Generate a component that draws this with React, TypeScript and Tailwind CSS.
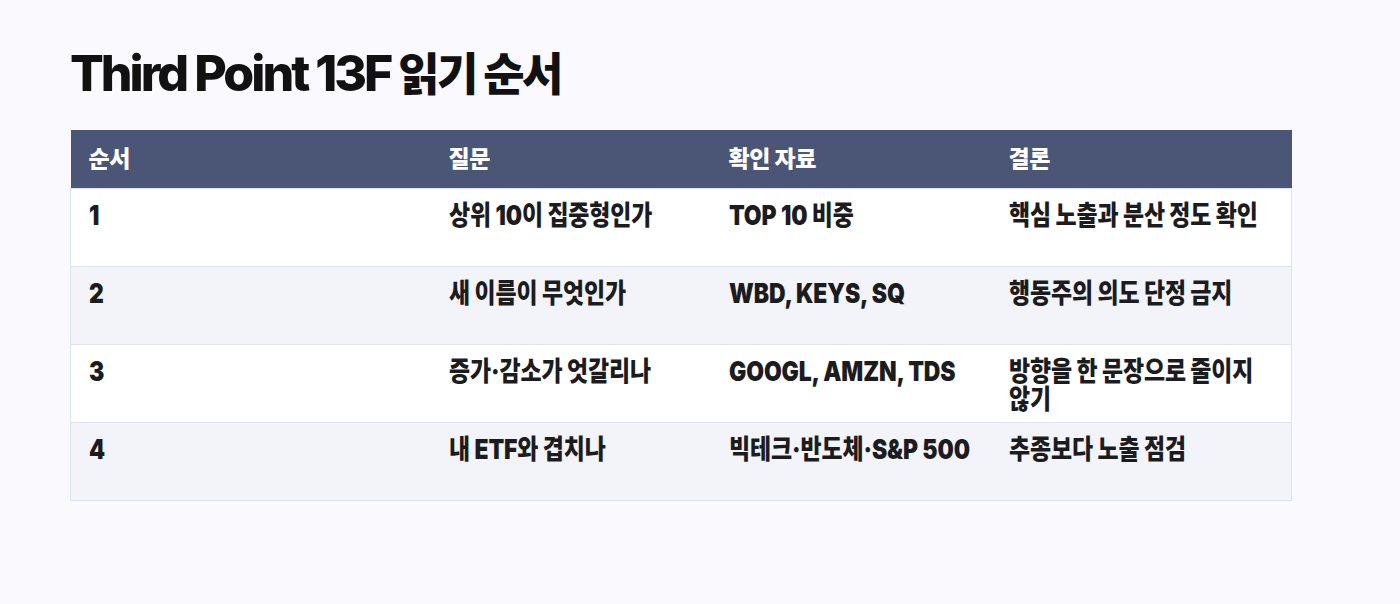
const rows = [
  { no: '1', q: '상위 10이 집중형인가', src: 'TOP 10 비중', end: '핵심 노출과 분산 정도 확인' },
  { no: '2', q: '새 이름이 무엇인가', src: 'WBD, KEYS, SQ', end: '행동주의 의도 단정 금지' },
  { no: '3', q: '증가·감소가 엇갈리나', src: 'GOOGL, AMZN, TDS', end: '방향을 한 문장으로 줄이지 않기' },
  { no: '4', q: '내 ETF와 겹치나', src: '빅테크·반도체·S&P 500', end: '추종보다 노출 점검' },
];

function Cell({ children, width }: { children: React.ReactNode; width: number }) {
  // row text is drawn narrower than the header text
  return (
    <td className="h-[78px] px-[18px] pt-[13px] align-top">
      <span
        className="inline-block origin-top-left scale-x-[0.85] text-[27px] font-black leading-[28px] tracking-[-0.005em] text-[#1c1c1e]"
        style={{ width: Math.round((width - 36) / 0.85) }}
      >
        {children}
      </span>
    </td>
  );
}

export default function App() {
  return (
    <div className="min-h-[604px] bg-[#f9f9fe] px-[70px] pt-[42px] font-['Inter','Noto_Sans_CJK_KR',sans-serif]">
      <h1 className="mb-[27px] text-[50px] font-extrabold leading-[60px] tracking-[-0.06em] text-[#111111]">
        Third Point 13F{' '}
        <span className="font-['Noto_Sans_CJK_KR',sans-serif] text-[45px] font-black tracking-[-0.06em]">읽기 순서</span>
      </h1>
      <table className="w-[1221px] table-fixed border-collapse">
        <colgroup>
          <col className="w-[360px]" />
          <col className="w-[280px]" />
          <col className="w-[280px]" />
          <col className="w-[301px]" />
        </colgroup>
        <thead>
          <tr className="bg-[#4b5676]">
            {['순서', '질문', '확인 자료', '결론'].map((h) => (
              <th
                key={h}
                className="h-[58px] px-[18px] text-left align-middle text-[23px] font-extrabold tracking-[-0.02em] text-white"
              >
                {h}
              </th>
            ))}
          </tr>
        </thead>
        <tbody>
          {rows.map((r, i) => (
            <tr
              key={r.no}
              className={`border border-[#dfe3eb] ${i % 2 === 1 ? 'bg-[#f3f4f9]' : 'bg-white'}`}
            >
              <Cell width={360}>{r.no}</Cell>
              <Cell width={280}>{r.q}</Cell>
              <Cell width={280}>{r.src}</Cell>
              <Cell width={301}>{r.end}</Cell>
            </tr>
          ))}
        </tbody>
      </table>
    </div>
  );
}
